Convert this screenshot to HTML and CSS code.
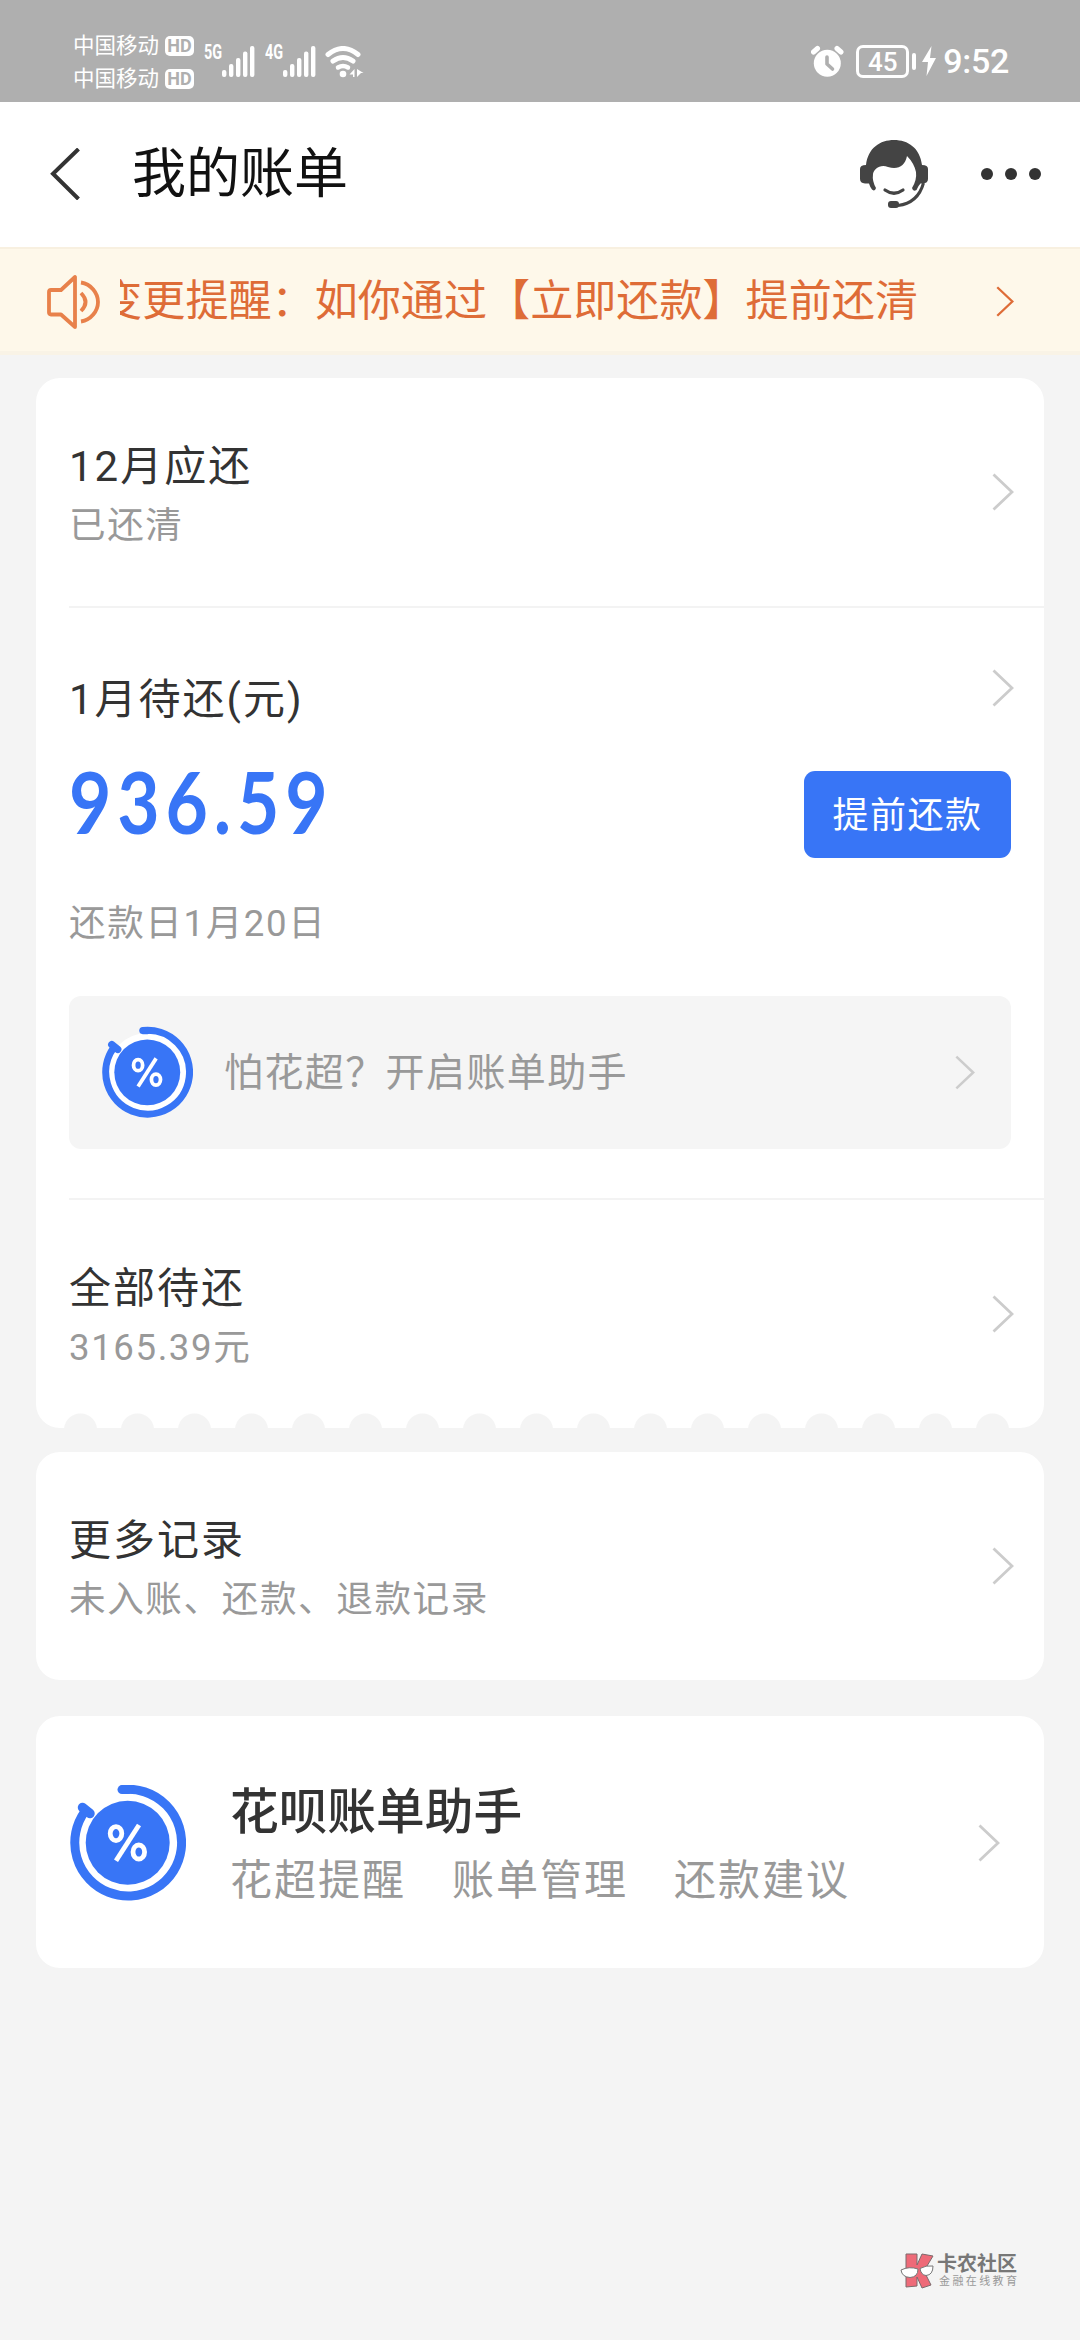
FILE: index.html
```html
<!DOCTYPE html>
<html lang="zh-CN">
<head>
<meta charset="utf-8">
<title>我的账单</title>
<link rel="stylesheet" href="styles.css">
</head>
<body>
<svg class="defs" width="0" height="0" aria-hidden="true">
  <symbol id="chevron" viewBox="0 0 22 38">
    <path d="M1.5 1.5 L20 19 L1.5 36.5" fill="none" stroke="currentColor" stroke-width="2.8"/>
  </symbol>
  <symbol id="bill" viewBox="0 0 116 116">
    <circle cx="57.7" cy="57.8" r="50" fill="#fff"/>
    <path d="M52 4.6 A53.4 53.4 0 1 1 14.8 26.5" fill="none" stroke="#3875f6" stroke-width="9"/>
    <path d="M52 4.6 H58" stroke="#3875f6" stroke-width="9" stroke-linecap="round"/>
    <path d="M12.5 22.5 L20 28.5" stroke="#3875f6" stroke-width="9.5" stroke-linecap="round"/>
    <circle cx="57.7" cy="57.8" r="42" fill="#3875f6"/>
    <g fill="none" stroke="#fff" stroke-width="4.8">
      <ellipse cx="46" cy="48.6" rx="5.8" ry="7"/>
      <ellipse cx="68.8" cy="67" rx="5.8" ry="7"/>
      <path d="M69 40 L46 75.8"/>
    </g>
  </symbol>
  <symbol id="signal" viewBox="0 0 33 32">
    <g fill="#fff">
      <rect x="0" y="24" width="4.4" height="7" rx="2"/>
      <rect x="7" y="18" width="4.4" height="13" rx="2"/>
      <rect x="14" y="12" width="4.4" height="19" rx="2"/>
      <rect x="21" y="5.5" width="4.4" height="25.5" rx="2"/>
      <rect x="28" y="0" width="4.4" height="31" rx="2"/>
    </g>
  </symbol>
</svg>

<header class="status">
  <div class="carriers">
    <div class="carrier"><span>中国移动</span><b class="hd">HD</b></div>
    <div class="carrier"><span>中国移动</span><b class="hd">HD</b></div>
  </div>
  <div class="net"><span class="gen">5G</span><svg class="bars"><use href="#signal"/></svg></div>
  <div class="net"><span class="gen">4G</span><svg class="bars"><use href="#signal"/></svg></div>
  <svg class="wifi" viewBox="0 0 39 32">
    <g fill="none" stroke="#fff" stroke-width="5" stroke-linecap="round">
      <path d="M3 8.5 Q18 -3.5 33 8.5"/>
      <path d="M8 15 Q18 8 28 15"/>
      <path d="M13 21.5 Q18 18.5 23 21.5" stroke-width="4.5"/>
    </g>
    <circle cx="18" cy="28" r="3.3" fill="#fff"/>
    <path d="M29.500 23 V31 H28 V28.500 H24.500 Z M32 23 L38.500 27 H36 L32 31 Z" fill="#fff"/>
  </svg>
  <div class="status-right">
    <svg class="alarm" viewBox="0 0 33 33">
      <circle cx="16.3" cy="18.3" r="13.5" fill="#fff"/>
      <path d="M2.500 7 L6.500 3.500 M30 7 L26 3.500" stroke="#fff" stroke-width="5" stroke-linecap="round"/>
      <path d="M16 12 V19 L21.500 24" fill="none" stroke="#afafaf" stroke-width="3.6" stroke-linecap="round" stroke-linejoin="round"/>
    </svg>
    <span class="battery">45</span><i class="nub"></i>
    <svg class="bolt" viewBox="0 0 14 30"><path d="M9.500 0 L0 16 H6 L4.500 30 L14 12 H8 Z" fill="#fff"/></svg>
    <span class="time">9:52</span>
  </div>
</header>

<nav class="nav">
  <svg class="back" viewBox="0 0 30 52"><path d="M28.500 1 L3 25.700 L28.500 51" fill="none" stroke="#333" stroke-width="4"/></svg>
  <h1 class="nav-title">我的账单</h1>
  <svg class="service" viewBox="0 0 68 68">
    <path fill="#444" d="M6 25 C8 8 20 0 34 0 C48 0 60 8 62 25 Q68 25 68 29 V39 Q68 43 63 43.500 L60.500 43.500 Q58 46 56.500 50 Q53 52 52 48 Q57 40 56 32 Q54 23 47 16 C45 26 38 30 28 27 C20 24 14 29 13 34 Q12 41 16 48 Q15 52 12 49.500 Q10 47 9 43.500 L5 43.500 Q0 43 0 39 V29 Q0 25 6 25 Z"/>
    <path d="M25 50 Q34 56.500 43 50" fill="none" stroke="#444" stroke-width="3.200" stroke-linecap="round"/>
    <path d="M63.500 43 Q58 63 38 65.500" fill="none" stroke="#444" stroke-width="3"/>
    <rect x="28" y="61" width="11" height="7" rx="3" fill="#444"/>
  </svg>
  <svg class="more" viewBox="0 0 60 12"><g fill="#333"><circle cx="6" cy="6" r="6"/><circle cx="30" cy="6" r="6"/><circle cx="54" cy="6" r="6"/></g></svg>
</nav>

<div class="notice">
  <svg class="speaker" viewBox="0 0 54 54">
    <g fill="none" stroke="#e8814b" stroke-width="3.8">
      <path d="M28 2 V52 L14 39.500 H4 Q2 39.500 2 37.500 V17 Q2 15 4 15 H14 Z" stroke-linejoin="round"/>
      <path d="M34 18 Q43 27 34 36"/>
      <path d="M34 7.500 C44 9 51 18 51 27 S44 45 34 46.500"/>
    </g>
  </svg>
  <div class="ticker"><span class="ticker-text">变更提醒：如你通过【立即还款】提前还清</span></div>
  <svg class="chevron notice-arrow"><use href="#chevron"/></svg>
</div>

<main class="content">
  <section class="card summary">
    <div class="row">
      <div class="row-text"><h2 class="title">12月应还</h2><p class="sub">已还清</p></div>
      <svg class="chevron"><use href="#chevron"/></svg>
    </div>
    <div class="current">
      <div class="current-head"><h2 class="title">1月待还(元)</h2><svg class="chevron"><use href="#chevron"/></svg></div>
      <div class="amount-line"><strong class="amount">936.59</strong><button class="pay">提前还款</button></div>
      <p class="sub due">还款日1月20日</p>
      <div class="helper">
        <svg class="helper-icon"><use href="#bill"/></svg>
        <span class="helper-text">怕花超？开启账单助手</span>
        <svg class="chevron"><use href="#chevron"/></svg>
      </div>
    </div>
    <div class="row">
      <div class="row-text"><h2 class="title">全部待还</h2><p class="sub">3165.39元</p></div>
      <svg class="chevron"><use href="#chevron"/></svg>
    </div>
    <div class="scallops"></div>
  </section>

  <section class="card records">
    <div class="row">
      <div class="row-text"><h2 class="title">更多记录</h2><p class="sub">未入账、还款、退款记录</p></div>
      <svg class="chevron"><use href="#chevron"/></svg>
    </div>
  </section>

  <section class="card assistant">
    <svg class="assistant-icon"><use href="#bill"/></svg>
    <div class="assistant-text">
      <h2 class="assistant-title">花呗账单助手</h2>
      <div class="tags"><span>花超提醒</span><span>账单管理</span><span>还款建议</span></div>
    </div>
    <svg class="chevron"><use href="#chevron"/></svg>
  </section>
</main>

<footer class="brand">
  <svg class="brand-logo" viewBox="0 0 34 36">
    <path d="M6 1 H17 V12 L22 1 L33 3 L24 18 L31 32 L22 35 L17 24 V33 L6 34 Z" fill="#ee6a78" stroke="#7c6a6c" stroke-width="1"/>
    <path d="M1 17 Q9 13 18 16 Q18 24 10 24.500 Q2 24 1 17 Z M20 15.500 Q26 12 33 13 Q33 22 26 22.500 Q21 22 20 15.500 Z" fill="#fff" stroke="#777" stroke-width="1"/>
  </svg>
  <div class="brand-text"><span class="brand-name">卡农社区</span><span class="brand-tag">金融在线教育</span></div>
</footer>
</body>
</html>
```
FILE: styles.css
```css
* { box-sizing: border-box; margin: 0; padding: 0; }
body {
  width: 1080px;
  height: 2340px;
  display: flex;
  flex-direction: column;
  overflow: hidden;
  background: #f4f4f4;
  color: #333;
  font-family: Roboto, "Noto Sans CJK SC", sans-serif;
}
svg { display: block; flex: none; }
h1, h2 { font-weight: 400; }
.defs { position: absolute; }

/* status bar */
.status {
  flex: none;
  display: flex;
  align-items: flex-start;
  height: 102px;
  padding: 0 71px 0 73px;
  background: #afafaf;
  color: #fff;
}
.carriers { display: flex; flex-direction: column; gap: 3px; padding-top: 31px; }
.carrier { display: flex; align-items: center; gap: 6px; height: 30px; font-size: 21.5px; line-height: 30px; }
.hd {
  width: 29px; height: 20px;
  border-radius: 5px;
  background: #fff;
  color: #afafaf;
  font-size: 18px; font-weight: 700; line-height: 20px;
  text-align: center;
}
.net { display: flex; align-items: flex-start; margin-left: 10px; padding-top: 46px; }
.gen { width: 18px; margin-top: -2px; font-size: 20px; font-weight: 700; line-height: 16px; transform: scaleX(.72); transform-origin: left; }
.bars { width: 33px; height: 32px; }
.wifi { width: 39px; height: 32px; margin: 46px 0 0 9px; }
.status-right { display: flex; align-items: center; margin-left: auto; padding-top: 45px; height: 77px; }
.alarm { width: 33px; height: 33px; }
.battery {
  width: 53px; height: 33px;
  margin-left: 12px;
  border: 3px solid #fff;
  border-radius: 7px;
  font-size: 26px; font-weight: 500; line-height: 28px;
  text-align: center;
}
.nub { width: 4px; height: 17px; margin: 0 6px 0 3px; border-radius: 2px; background: #fff; }
.bolt { width: 14px; height: 30px; }
.time { margin-left: 7px; font-size: 34px; font-weight: 500; line-height: 34px; letter-spacing: -.3px; }

/* navigation bar */
.nav {
  flex: none;
  display: flex;
  align-items: center;
  height: 145px;
  padding: 0 39px 2px 50px;
  background: #fff;
}
.back { width: 30px; height: 52px; }
.nav-title { margin: 2px auto 0 52px; color: #111; font-size: 54px; line-height: 70px; }
.service { width: 68px; height: 68px; }
.more { width: 60px; height: 12px; margin-left: 53px; }

/* announcement */
.notice {
  flex: none;
  display: flex;
  align-items: center;
  height: 108px;
  padding: 0 66px 0 47px;
  border-top: 2px solid #f8f0e0;
  border-bottom: 4px solid #f9f3e6;
  background: #fef8ea;
  color: #de6c37;
}
.speaker { width: 54px; height: 54px; margin-top: 4px; }
.ticker { display: flex; justify-content: flex-end; width: 798px; margin: 3px 0 0 19px; overflow: hidden; }
.ticker-text { font-size: 43.1px; line-height: 60px; white-space: nowrap; }
.chevron { width: 22px; height: 38px; color: #ccc; }
.notice-arrow { width: 18px; height: 31px; margin: 2px 0 0 auto; color: #de6c37; }

/* cards */
.content { display: flex; flex-direction: column; padding: 23px 36px 0; }
.card { background: #fff; border-radius: 24px; }
.summary { position: relative; height: 1050px; }
.row {
  display: flex;
  justify-content: space-between;
  align-items: center;
  height: 228px;
  margin-left: 33px;
  padding-right: 30px;
}
.row-text { display: flex; flex-direction: column; gap: 4px; padding-top: 3px; }
.title { color: #333; font-size: 42px; line-height: 60px; letter-spacing: 2px; }
.sub { color: #999; font-size: 36.6px; line-height: 50px; letter-spacing: 1.6px; }
.current {
  height: 594px;
  margin-left: 33px;
  padding: 61px 33px 0 0;
  border-top: 2px solid #f3f3f3;
  border-bottom: 2px solid #f3f3f3;
}
.current-head { display: flex; justify-content: space-between; margin-right: -3px; }
.current-head .title { margin-top: 1px; }
.amount-line { display: flex; justify-content: space-between; height: 87px; margin-top: 41px; }
.amount {
  color: #3875f6;
  font: 700 87px/60px Lato, Roboto, sans-serif;
  letter-spacing: 7px;
  transform: scaleX(.84);
  transform-origin: left;
}
.pay {
  width: 207px; height: 87px;
  padding-top: 3px;
  border: 0;
  border-radius: 11px;
  background: #3875f6;
  color: #fff;
  font-family: inherit; font-size: 36px; line-height: 84px; letter-spacing: 1.5px;
}
.due { margin-top: 41px; }
.helper {
  display: flex;
  align-items: center;
  height: 153px;
  margin-top: 47px;
  padding: 0 36px 0 33px;
  border-radius: 12px;
  background: #f5f5f5;
}
.helper-icon { width: 91px; height: 93px; }
.helper-text { margin: 0 auto 0 31px; color: #999; font-size: 39px; line-height: 56px; letter-spacing: 1.4px; }
.helper .chevron { width: 20px; height: 35px; }
.scallops {
  position: absolute;
  left: 15.5px; bottom: 0;
  width: 969px; height: 15px;
  background: radial-gradient(circle at 28.5px 17px, #f4f4f4 16px, transparent 17px) 0 0 / 57px 15px repeat-x;
}
.records { margin-top: 24px; }
.assistant {
  display: flex;
  align-items: center;
  height: 252px;
  margin-top: 36px;
  padding: 2px 44px 0 34px;
}
.assistant-icon { width: 116px; height: 116px; }
.assistant-text { margin: 7px auto 0 44px; }
.assistant-title { font-size: 48.7px; font-weight: 500; line-height: 68px; }
.tags { display: flex; gap: 46px; color: #999; font-size: 42px; line-height: 68px; }
.tags span { width: 176px; letter-spacing: 2px; white-space: nowrap; }

/* community mark */
.brand { display: flex; align-items: center; gap: 3px; margin: auto 60px 51px auto; }
.brand-logo { width: 34px; height: 36px; }
.brand-text { display: flex; flex-direction: column; width: 83px; }
.brand-name { color: #777; font-size: 20px; font-weight: 700; line-height: 22px; }
.brand-tag { padding-left: 2px; color: #999; font-size: 11px; line-height: 14px; letter-spacing: 2.4px; white-space: nowrap; }
```
